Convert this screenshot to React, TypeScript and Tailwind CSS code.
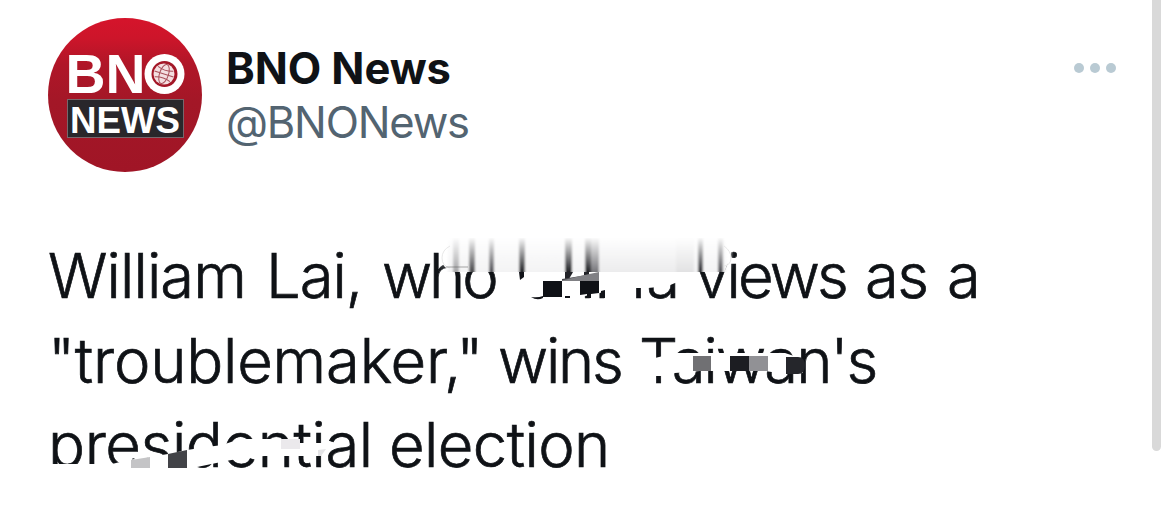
const STREAKS = [
  { x: 453, w: 6, tone: '#a5a5a7' },
  { x: 469, w: 6, tone: '#4b4b4e' },
  { x: 489, w: 5, tone: '#55555a' },
  { x: 519, w: 6, tone: '#26272b' },
  { x: 565, w: 7, tone: '#202125' },
  { x: 585, w: 6, tone: '#202125' },
  { x: 591, w: 8, tone: '#77777b' },
  { x: 698, w: 5, tone: '#303136' },
  { x: 718, w: 5, tone: '#55555a' },
]

function Avatar() {
  return (
    <svg width="154" height="154" viewBox="48 18 154 154" className="shrink-0">
      <defs>
        <linearGradient id="disc" x1="0" y1="0" x2="0" y2="1">
          <stop offset="0" stopColor="#d5142b" />
          <stop offset="0.13" stopColor="#cd152a" />
          <stop offset="0.3" stopColor="#b01628" />
          <stop offset="0.55" stopColor="#a31727" />
          <stop offset="1" stopColor="#a01526" />
        </linearGradient>
      </defs>
      <circle cx="125" cy="95" r="77" fill="url(#disc)" />
      <g fill="#fff" fontFamily="'Liberation Sans', Arial, sans-serif" fontWeight="700">
        <text x="65.5" y="93" fontSize="55" textLength="80" lengthAdjust="spacingAndGlyphs">BN</text>
        <rect x="67.5" y="99.5" width="116" height="38" fill="#29272b" stroke="#77676c" strokeWidth="1" />
        <text x="70" y="132.5" fontSize="37" textLength="110" lengthAdjust="spacingAndGlyphs">NEWS</text>
      </g>
      <circle cx="164.5" cy="74" r="20" fill="#fff" />
      <circle cx="164.5" cy="74" r="13" fill="#a31727" />
      <circle cx="164" cy="74" r="10.5" fill="#f4dfe1" />
      <g fill="none" stroke="#a8505a" strokeWidth="1" transform="rotate(18 164 74)">
        <ellipse cx="164" cy="74" rx="4.5" ry="10" />
        <path d="M154 74h20M156 68.5q8 3 16 0M156 79.5q8-3 16 0" />
      </g>
    </svg>
  )
}

function Marks() {
  return (
    <svg width="1170" height="510" viewBox="0 0 1170 510" className="pointer-events-none absolute left-0 top-0">
      <defs>
        <linearGradient id="fade" x1="0" y1="0" x2="0" y2="1">
          <stop offset="0" stopColor="#fff" />
          <stop offset="0.35" stopColor="#fff" stopOpacity="0.65" />
          <stop offset="1" stopColor="#fff" stopOpacity="0" />
        </linearGradient>
        <filter id="soft" x="-5%" width="110%">
          <feGaussianBlur stdDeviation="1.2 0" />
        </filter>
      </defs>

      {/* first line */}
      <path d="M452 236H722Q731 246 731 256L724 272H452Q441 267 441 256Q442 248 452 236Z" fill="#fff" />
      <path d="M509 246H685V281L675 283L668 286L648 288H634V300H607V290L600 293L580 297L562 300H509Z" fill="#fff" />
      <g filter="url(#soft)">
        <rect x="448" y="238" width="278" height="34" fill="#f3f3f4" />
        <rect x="599" y="238" width="95" height="34" fill="#ececed" />
        <rect x="676" y="238" width="18" height="34" fill="#e2e2e3" />
        {STREAKS.map((s) => (
          <rect key={s.x} x={s.x} y="238" width={s.w} height="34" fill={s.tone} />
        ))}
        <rect x="440" y="237" width="292" height="35" fill="url(#fade)" />
      </g>
      <path d="M450 246q-8 4-8 12t8 10M724 246q7 5 7 12t-7 8" fill="none" stroke="#e8e8e8" />
      <path d="M446 267h22" stroke="#555" strokeOpacity="0.5" />
      <path d="M519 272H524V277L520 280Z" fill="#111318" />
      <path d="M531 297Q538 298 543 296V298Q537 301 531 297Z" fill="#111318" />
      <path d="M543 281H562V297H543Z" fill="#0f1116" />
      <path d="M565 272H573L569 279H565Z" fill="#222328" />
      <path d="M584 272H589V275H584Z" fill="#222328" />
      <path d="M562 279L587 275V281H562Z" fill="#48494d" />
      <path d="M580 276L599 272V281H562V280.500Z" fill="#808084" />
      <path d="M562 281H580V297H562Z" fill="#fff" />
      <path d="M565 296H570V298H565Z" fill="#111318" />
      <path d="M580 281H599V293L591 294V298H587V294L580 295Z" fill="#0f1116" />
      <path d="M601 291L605 290V298H601Z" fill="#111318" />

      {/* second line */}
      <path d="M655 358L675 353H785L797 357L803 373L785 374L765 371H700L675 373L668 376H652Z" fill="#fff" />
      <path d="M693 356H711V371H693Z" fill="#707073" />
      <path d="M730 356H749V371H730Z" fill="#1c1d22" />
      <path d="M749 356H768V371H749Z" fill="#919195" />
      <path d="M786 357H798Q805 357 805 365.5T798 374H786Z" fill="#25262b" />

      {/* third line */}
      <path d="M48 464H112L128 460L150 457L168 454L187 450L200 448L222 445L240 439H300V443H326L321 456H265L248 457L226 461L197 467V484H48Z" fill="#fff" />
      <path d="M131 460L150 457V468H131Z" fill="#c4c4c6" />
      <path d="M168 454L187 450V468H168Z" fill="#424347" />
      <path d="M281 439H300V449H281Z" fill="#ebe9ec" />
      <path d="M318 450L326 449L321 456H318Z" fill="#e4e4e6" />
    </svg>
  )
}

export default function App() {
  return (
    <main className="relative flex h-[510px] w-[1170px] justify-between overflow-hidden bg-white font-['Inter','Liberation_Sans',sans-serif] text-[#0f1216]">
      <article className="flex-1 pl-12 pt-[18px]">
        <header className="flex">
          <Avatar />
          <div className="ml-6 flex flex-col pt-[23px] text-[43.5px] leading-[54px]">
            <h1 className="font-bold tracking-[-0.1px]">BNO News</h1>
            <p className="tracking-[-1.2px] text-[#536471]">@BNONews</p>
          </div>
          <button aria-label="More" className="ml-auto mr-[36px] mt-[45px] flex h-[10px] gap-[6px]">
            <span className="size-[10px] rounded-full bg-[#b9cad3]" />
            <span className="size-[10px] rounded-full bg-[#b9cad3]" />
            <span className="size-[10px] rounded-full bg-[#b9cad3]" />
          </button>
        </header>

        <div className="mt-[62px] whitespace-nowrap text-[61.5px] font-light leading-[84.5px] [-webkit-text-stroke:0.7px_#0f1216]">
          <p className="flex">
            <span className="w-[218px] tracking-[-0.9px]">William</span>
            <span className="w-[116px] tracking-[-1px]">Lai,</span>
            <span className="w-[131px] tracking-[-3px]">who</span>
            <span className="w-[182px] tracking-[0.4px]">China</span>
            <span className="w-[170px] tracking-[-2.8px]">views</span>
            <span className="w-[82px] tracking-[-1.5px]">as</span>
            <span>a</span>
          </p>
          <p className="flex">
            <span className="w-[450px] tracking-[-0.2px]">"troublemaker,"</span>
            <span className="w-[141px] tracking-[-2.2px]">wins</span>
            <span className="tracking-[-1.9px]">Taiwan's</span>
          </p>
          <p className="flex">
            <span className="w-[341px] tracking-[-0.4px]">presidential</span>
            <span className="tracking-[-0.6px]">election</span>
          </p>
        </div>
      </article>
      <Marks />
      <div className="mr-[9px] h-[451px] w-[9px] rounded-b-full bg-[#d9d9d9]" />
    </main>
  )
}
